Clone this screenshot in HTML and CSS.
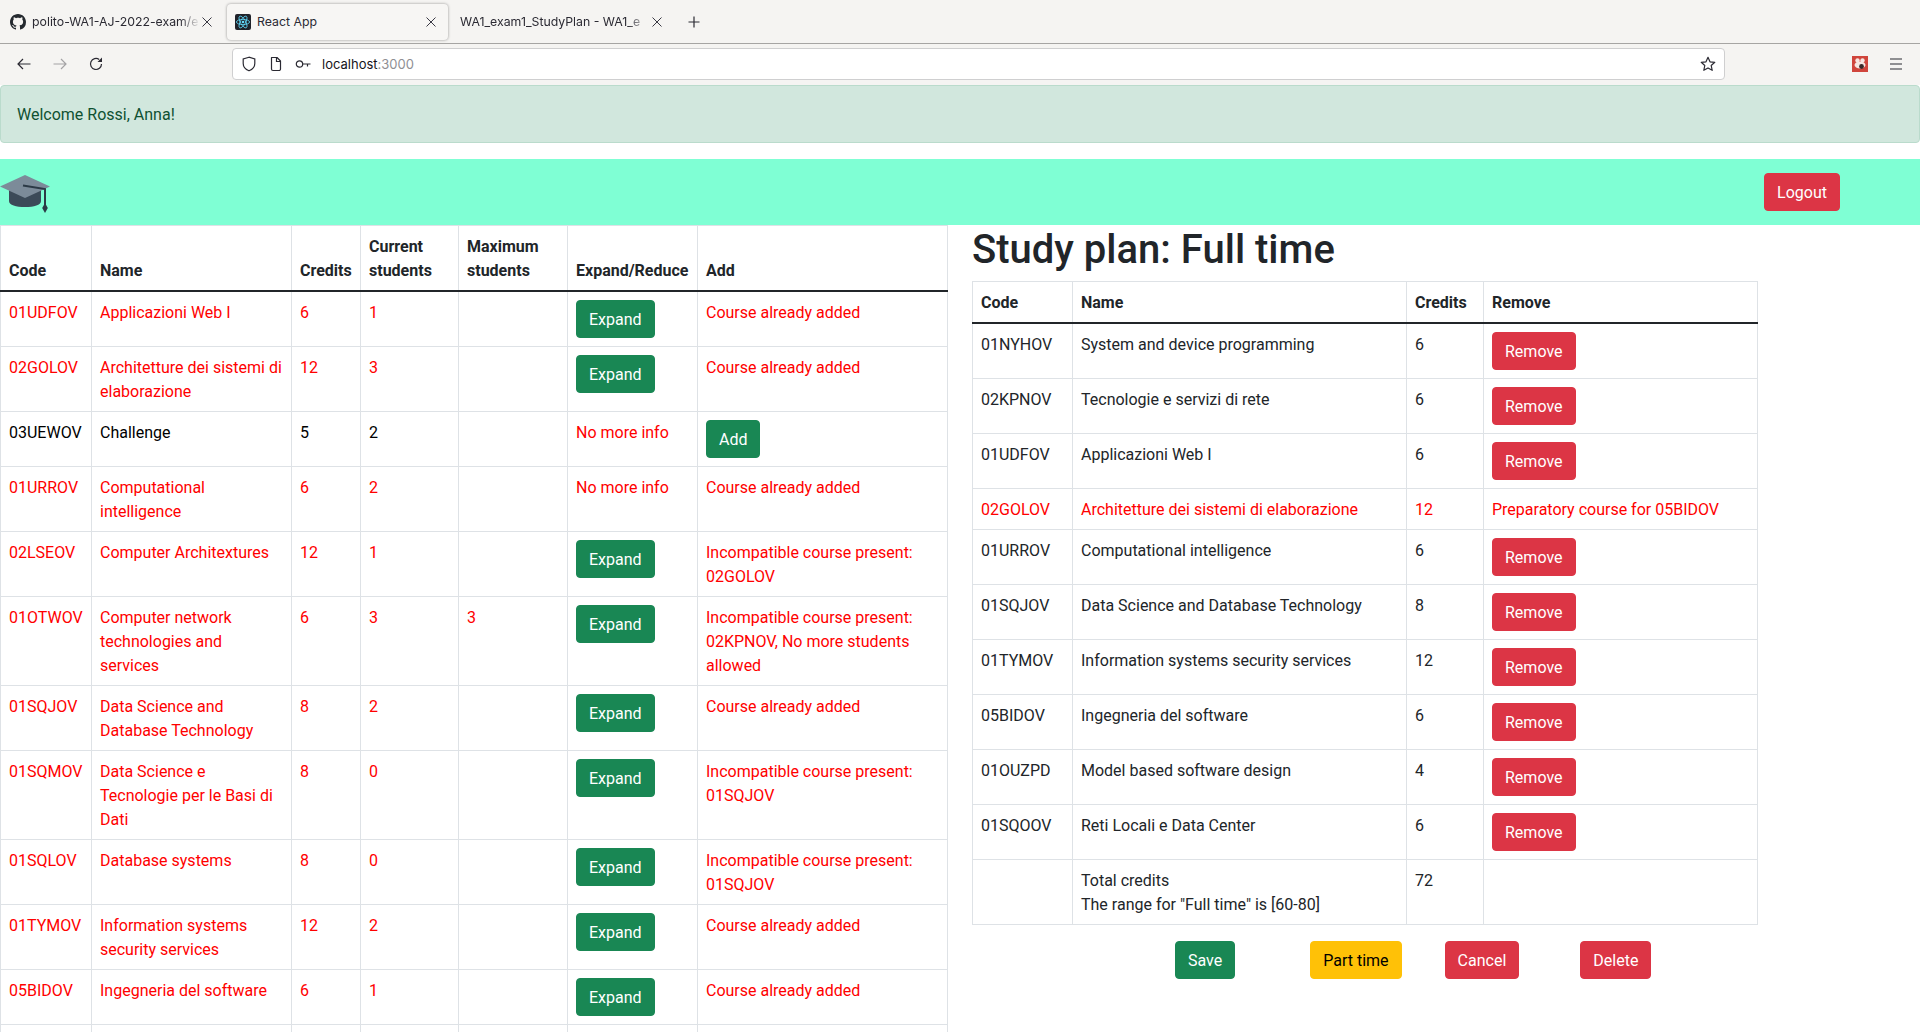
FILE: index.html

```html
<!DOCTYPE html>
<html lang="en">
<head>
    <meta charset="UTF-8">
    <title>React App</title>
    <link rel="stylesheet" href="styles.css">
</head>
<body>
    <!-- browser chrome -->
    <div class="tabstrip">
        <div class="tab tab-first">
            <svg class="favicon" viewBox="0 0 16 16"><path fill="#24292f" d="M8 0C3.58 0 0 3.58 0 8c0 3.54 2.29 6.53 5.47 7.59.4.07.55-.17.55-.38 0-.19-.01-.82-.01-1.49-2.01.37-2.53-.49-2.69-.94-.09-.23-.48-.94-.82-1.13-.28-.15-.68-.52-.01-.53.63-.01 1.08.58 1.23.82.72 1.21 1.87.87 2.33.66.07-.52.28-.87.51-1.07-1.78-.2-3.64-.89-3.64-3.95 0-.87.31-1.59.82-2.15-.08-.2-.36-1.02.08-2.12 0 0 .67-.21 2.2.82.64-.18 1.32-.27 2-.27s1.36.09 2 .27c1.53-1.04 2.2-.82 2.2-.82.44 1.1.16 1.92.08 2.12.51.56.82 1.27.82 2.15 0 3.07-1.87 3.75-3.65 3.95.29.25.54.73.54 1.48 0 1.07-.01 1.93-.01 2.2 0 .21.15.46.55.38A8.01 8.01 0 0 0 16 8c0-4.42-3.58-8-8-8z"/></svg>
            <span class="tab-title fade">polito-WA1-AJ-2022-exam/e</span>
            <svg class="tab-close" viewBox="0 0 14 14"><path d="M2.500 2.500l9 9M11.500 2.500l-9 9" stroke="#3a3944" stroke-width="1" fill="none"/></svg>
        </div>
        <div class="tab tab-active">
            <svg class="favicon" viewBox="0 0 16 16">
                <rect width="16" height="16" rx="2" fill="#20232a"/>
                <g fill="none" stroke="#61dafb" stroke-width=".8">
                    <ellipse cx="8" cy="8" rx="6.600" ry="2.600"/>
                    <ellipse cx="8" cy="8" rx="6.600" ry="2.600" transform="rotate(60 8 8)"/>
                    <ellipse cx="8" cy="8" rx="6.600" ry="2.600" transform="rotate(120 8 8)"/>
                </g>
                <circle cx="8" cy="8" r="1.300" fill="#61dafb"/>
            </svg>
            <span class="tab-title">React App</span>
            <svg class="tab-close" viewBox="0 0 14 14"><path d="M2.500 2.500l9 9M11.500 2.500l-9 9" stroke="#3a3944" stroke-width="1" fill="none"/></svg>
        </div>
        <div class="tab tab-last">
            <span class="tab-title fade">WA1_exam1_StudyPlan - WA1_e</span>
            <svg class="tab-close" viewBox="0 0 14 14"><path d="M2.500 2.500l9 9M11.500 2.500l-9 9" stroke="#3a3944" stroke-width="1" fill="none"/></svg>
        </div>
        <svg class="newtab" viewBox="0 0 16 16"><path d="M8 2.500v11M2.500 8h11" stroke="#2b2a33" stroke-width="1.200" fill="none"/></svg>
    </div>

    <div class="toolbar">
        <svg class="tool-icon" viewBox="0 0 16 16"><path d="M14.500 8H2M7 3 2 8l5 5" stroke="#2b2a33" stroke-width="1.200" fill="none"/></svg>
        <svg class="tool-icon tool-off" viewBox="0 0 16 16"><path d="M1.500 8H14M9 3l5 5-5 5" stroke="#2b2a33" stroke-width="1.200" fill="none"/></svg>
        <svg class="tool-icon" viewBox="0 0 16 16"><path d="M13.500 8A5.500 5.500 0 1 1 11.200 3.500" stroke="#2b2a33" stroke-width="1.200" fill="none"/><path d="M14 1.500V6H9.500z" fill="#2b2a33"/></svg>
        <div class="urlbar">
            <svg class="url-icon" viewBox="0 0 16 16"><path d="M8 1.200 2.200 3v4.500c0 3.600 2.700 6 5.800 7.300 3.100-1.300 5.800-3.700 5.800-7.300V3z" stroke="#2b2a33" stroke-width="1.200" fill="none"/></svg>
            <svg class="url-icon" viewBox="0 0 16 16"><path d="M3.500 1.500h5.500l3.500 3.500v8a1.500 1.500 0 0 1-1.500 1.500h-6a1.500 1.500 0 0 1-1.500-1.500z" stroke="#2b2a33" stroke-width="1.200" fill="none" stroke-linejoin="round"/><path d="M8.500 1.500v4h4" stroke="#2b2a33" stroke-width="1.200" fill="none"/></svg>
            <svg class="url-icon" viewBox="0 0 16 16"><circle cx="4.500" cy="8" r="3.200" stroke="#2b2a33" stroke-width="1.200" fill="none"/><path d="M7.700 8H15.500M12.500 8v2.500" stroke="#2b2a33" stroke-width="1.200" fill="none"/></svg>
            <span class="url-text">localhost<span class="url-port">:3000</span></span>
            <svg class="url-star" viewBox="0 0 16 16"><path d="m8 1.300 2 4.500 4.800.5-3.600 3.200 1 4.800L8 11.900l-4.200 2.400 1-4.800L1.200 6.300 6 5.800z" stroke="#2b2a33" stroke-width="1.200" stroke-linejoin="round" fill="none"/></svg>
        </div>
        <svg class="ext-icon" viewBox="0 0 16 16">
            <rect width="16" height="16" fill="#d0453c"/>
            <circle cx="5.500" cy="4.500" r="2.200" fill="#f6e6e2"/>
            <circle cx="10.500" cy="4.500" r="2.200" fill="#f6e6e2"/>
            <ellipse cx="8" cy="9" rx="5.500" ry="3.500" fill="#f6e6e2"/>
            <circle cx="9.500" cy="10.500" r="2.400" fill="#3a2a2a"/>
        </svg>
        <svg class="menu-icon" viewBox="0 0 12 12"><path d="M0 1h12M0 6h12M0 11h12" stroke="#2b2a33" stroke-width="1.100" fill="none"/></svg>
    </div>

    <!-- page -->
    <div class="alert-welcome">Welcome Rossi, Anna!</div>

    <nav class="topnav">
        <svg class="logo" viewBox="0 0 50 40">
            <path d="M9 14v12c0 4 7 6 16 6s16-2 16-6V14z" fill="#3c4a58"/>
            <path d="M0 11.500 25 0l25 11.500L25 23z" fill="#7c8b99"/>
            <path d="M23 10.500 45 14v16" stroke="#2c3a46" stroke-width="2" fill="none"/>
            <path d="M45 28l2.800 5-2.800 5-2.800-5z" fill="#2c3a46"/>
        </svg>
        <button class="btn btn-danger">Logout</button>
    </nav>

    <div class="columns">
        <table class="grid-table courses">
            <colgroup>
                <col class="c-code"><col class="c-name"><col class="c-credits"><col class="c-current"><col class="c-max"><col class="c-expand"><col>
            </colgroup>
            <thead>
                <tr><th>Code</th><th>Name</th><th>Credits</th><th>Current students</th><th>Maximum students</th><th>Expand/Reduce</th><th>Add</th></tr>
            </thead>
            <tbody>
                <tr class="blocked"><td>01UDFOV</td><td>Applicazioni Web I</td><td>6</td><td>1</td><td></td><td><button class="btn btn-success">Expand</button></td><td>Course already added</td></tr>
                <tr class="blocked"><td>02GOLOV</td><td>Architetture dei sistemi di elaborazione</td><td>12</td><td>3</td><td></td><td><button class="btn btn-success">Expand</button></td><td>Course already added</td></tr>
                <tr class="plain"><td>03UEWOV</td><td>Challenge</td><td>5</td><td>2</td><td></td><td class="red">No more info</td><td><button class="btn btn-success">Add</button></td></tr>
                <tr class="blocked"><td>01URROV</td><td>Computational intelligence</td><td>6</td><td>2</td><td></td><td>No more info</td><td>Course already added</td></tr>
                <tr class="blocked"><td>02LSEOV</td><td>Computer Architextures</td><td>12</td><td>1</td><td></td><td><button class="btn btn-success">Expand</button></td><td>Incompatible course present: 02GOLOV</td></tr>
                <tr class="blocked"><td>01OTWOV</td><td>Computer network technologies and services</td><td>6</td><td>3</td><td>3</td><td><button class="btn btn-success">Expand</button></td><td>Incompatible course present: 02KPNOV, No more students allowed</td></tr>
                <tr class="blocked"><td>01SQJOV</td><td>Data Science and Database Technology</td><td>8</td><td>2</td><td></td><td><button class="btn btn-success">Expand</button></td><td>Course already added</td></tr>
                <tr class="blocked"><td>01SQMOV</td><td>Data Science e Tecnologie per le Basi di Dati</td><td>8</td><td>0</td><td></td><td><button class="btn btn-success">Expand</button></td><td>Incompatible course present: 01SQJOV</td></tr>
                <tr class="blocked"><td>01SQLOV</td><td>Database systems</td><td>8</td><td>0</td><td></td><td><button class="btn btn-success">Expand</button></td><td>Incompatible course present: 01SQJOV</td></tr>
                <tr class="blocked"><td>01TYMOV</td><td>Information systems security services</td><td>12</td><td>2</td><td></td><td><button class="btn btn-success">Expand</button></td><td>Course already added</td></tr>
                <tr class="blocked"><td>05BIDOV</td><td>Ingegneria del software</td><td>6</td><td>1</td><td></td><td><button class="btn btn-success">Expand</button></td><td>Course already added</td></tr>
                <tr><td class="empty-cell"></td><td></td><td></td><td></td><td></td><td></td><td></td></tr>
            </tbody>
        </table>

        <div class="plan">
            <h1 class="plan-title">Study plan: Full time</h1>
            <table class="grid-table plan-table">
                <colgroup>
                    <col class="p-code"><col class="p-name"><col class="p-credits"><col>
                </colgroup>
                <thead>
                    <tr><th>Code</th><th>Name</th><th>Credits</th><th>Remove</th></tr>
                </thead>
                <tbody>
                    <tr><td>01NYHOV</td><td>System and device programming</td><td>6</td><td><button class="btn btn-danger">Remove</button></td></tr>
                    <tr><td>02KPNOV</td><td>Tecnologie e servizi di rete</td><td>6</td><td><button class="btn btn-danger">Remove</button></td></tr>
                    <tr><td>01UDFOV</td><td>Applicazioni Web I</td><td>6</td><td><button class="btn btn-danger">Remove</button></td></tr>
                    <tr class="blocked"><td>02GOLOV</td><td>Architetture dei sistemi di elaborazione</td><td>12</td><td>Preparatory course for 05BIDOV</td></tr>
                    <tr><td>01URROV</td><td>Computational intelligence</td><td>6</td><td><button class="btn btn-danger">Remove</button></td></tr>
                    <tr><td>01SQJOV</td><td>Data Science and Database Technology</td><td>8</td><td><button class="btn btn-danger">Remove</button></td></tr>
                    <tr><td>01TYMOV</td><td>Information systems security services</td><td>12</td><td><button class="btn btn-danger">Remove</button></td></tr>
                    <tr><td>05BIDOV</td><td>Ingegneria del software</td><td>6</td><td><button class="btn btn-danger">Remove</button></td></tr>
                    <tr><td>01OUZPD</td><td>Model based software design</td><td>4</td><td><button class="btn btn-danger">Remove</button></td></tr>
                    <tr><td>01SQOOV</td><td>Reti Locali e Data Center</td><td>6</td><td><button class="btn btn-danger">Remove</button></td></tr>
                    <tr><td></td><td>Total credits<br>The range for "Full time" is [60-80]</td><td>72</td><td></td></tr>
                </tbody>
            </table>
            <div class="plan-actions">
                <button class="btn btn-success act-save">Save</button>
                <button class="btn btn-warning act-part">Part time</button>
                <button class="btn btn-danger act-cancel">Cancel</button>
                <button class="btn btn-danger act-delete">Delete</button>
            </div>
        </div>
    </div>
</body>
</html>
```

FILE: styles.css

```css
* {
    box-sizing: border-box;
}
html, body {
    height: 1032px;
    overflow: hidden;
}
body {
    margin: 0;
    font-family: Roboto, sans-serif;
    font-size: 16px;
    line-height: 24px;
    color: #212529;
    background-color: #fff;
}

/* browser chrome */
.tabstrip {
    display: flex;
    align-items: center;
    height: 44px;
    padding-left: 8px;
    background-color: #f5f4f2;
    border-bottom: 1px solid #a6a5a3;
    font-family: Inter, sans-serif;
    font-size: 12.3px;
    color: #2b2a33;
}
.tab {
    display: flex;
    align-items: center;
    height: 36px;
    flex: none;
}
.tab-first {
    width: 206px;
    margin-right: 13px;
    padding-left: 2px;
}
.tab-active {
    width: 221px;
    padding: 0 10px 0 8px;
    background-color: #f7f6f4;
    border-radius: 4px;
    box-shadow: 0 0 3px rgba(0,0,0,0.4);
}
.tab-last {
    width: 216px;
    padding-left: 12px;
}
.favicon {
    width: 16px;
    height: 16px;
    margin-right: 6px;
    flex: none;
}
.tab-title {
    flex: 1;
    padding-top: 1px;
    overflow: hidden;
    white-space: nowrap;
}
.fade {
    -webkit-mask-image: linear-gradient(to right, #000 88%, transparent);
    mask-image: linear-gradient(to right, #000 88%, transparent);
}
.tab-close {
    width: 14px;
    height: 14px;
    flex: none;
}
.newtab {
    width: 16px;
    height: 16px;
    margin-left: 22px;
}
.toolbar {
    display: flex;
    align-items: center;
    height: 41px;
    padding-left: 16px;
    padding-bottom: 1px;
    background-color: #f5f4f2;
}
.tool-icon {
    width: 16px;
    height: 16px;
    margin-right: 20px;
    flex: none;
}
.tool-off {
    opacity: 0.4;
}
.urlbar {
    display: flex;
    align-items: center;
    width: 1493px;
    height: 32px;
    margin-left: 108px;
    padding: 0 8px;
    background-color: #fff;
    border: 1px solid #cfcfd0;
    border-radius: 4px;
    font-family: Inter, sans-serif;
    font-size: 13px;
    flex: none;
}
.url-icon {
    width: 16px;
    height: 16px;
    margin-right: 11px;
    flex: none;
}
.url-text {
    flex: 1;
    color: #15141a;
}
.url-port {
    color: #8f8f94;
}
.url-star {
    width: 16px;
    height: 16px;
}
.ext-icon {
    width: 16px;
    height: 16px;
    margin-left: 127px;
    flex: none;
}
.menu-icon {
    width: 12px;
    height: 12px;
    margin-left: 22px;
    flex: none;
}

/* page */
.alert-welcome {
    height: 58px;
    margin-bottom: 16px;
    padding: 17px 16px 15px;
    color: #0f5132;
    background-color: #d1e7dd;
    border: 1px solid #badbcc;
    border-radius: 4px;
}
.topnav {
    display: flex;
    align-items: center;
    justify-content: space-between;
    height: 66px;
    padding-right: 80px;
    background-color: #7fffd4;
}
.logo {
    width: 50px;
    height: 40px;
    margin-top: 6px;
}
.btn {
    display: inline-block;
    padding: 7px 12px 5px;
    font-family: inherit;
    font-size: 16px;
    line-height: 24px;
    color: #fff;
    border: 1px solid transparent;
    border-radius: 4px;
    cursor: pointer;
}
.btn-success {
    background-color: #198754;
    border-color: #198754;
}
.btn-danger {
    background-color: #dc3545;
    border-color: #dc3545;
}
.btn-warning {
    color: #000;
    background-color: #ffc107;
    border-color: #ffc107;
}

.columns {
    display: flex;
    align-items: flex-start;
    gap: 24px;
}
.grid-table {
    table-layout: fixed;
    border-collapse: collapse;
}
.grid-table th,
.grid-table td {
    padding: 9px 8px 7px;
    border: 1px solid #dee2e6;
    vertical-align: top;
    text-align: left;
}
.grid-table th {
    vertical-align: bottom;
    font-weight: 700;
    border-bottom: 2px solid #212529;
}
.grid-table .btn {
    margin: -1px 0 1px;
}
.blocked td, .red {
    color: #f00;
}
.plain td {
    color: #000;
}
.plain td.red {
    color: #f00;
}
.courses {
    width: 948px;
    flex: none;
}
.c-code { width: 91px; }
.c-name { width: 200px; }
.c-credits { width: 69px; }
.c-current { width: 98px; }
.c-max { width: 109px; }
.c-expand { width: 130px; }
.empty-cell {
    height: 55px;
}

.plan {
    width: 786px;
    flex: none;
}
.plan-title {
    margin: 0 0 7px;
    padding-top: 1px;
    font-size: 40px;
    font-weight: 500;
    line-height: 48px;
}
.plan-table {
    width: 786px;
}
.p-code { width: 100px; }
.p-name { width: 334px; }
.p-credits { width: 77px; }

.plan-actions {
    display: flex;
    margin-top: 16px;
    padding-left: 203px;
}
.act-part { margin-left: 75px; }
.act-cancel { margin-left: 43px; }
.act-delete { margin-left: 61px; }
```
